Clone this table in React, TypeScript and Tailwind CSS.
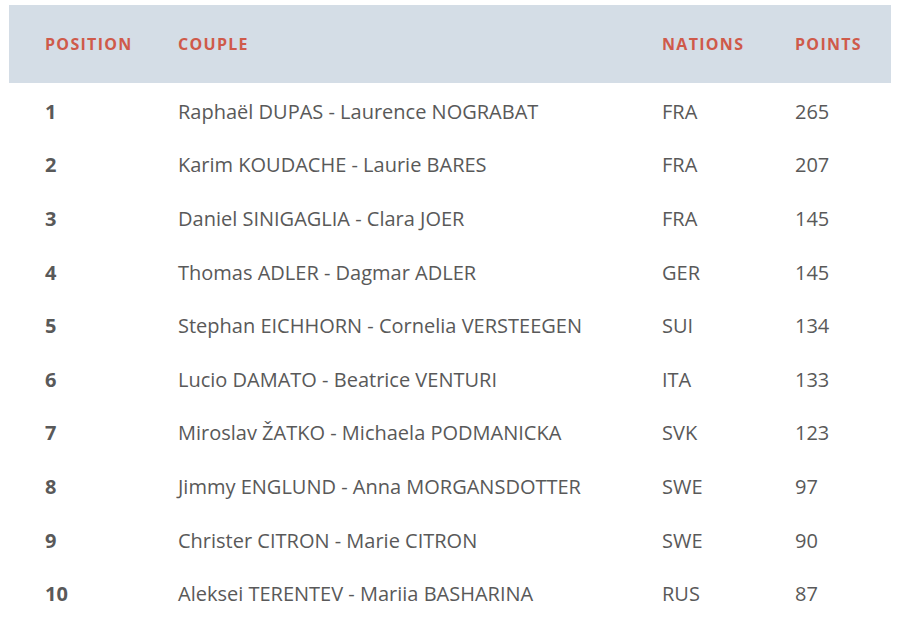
import React from "react";

const rows = [
  ["1", "Raphaël DUPAS - Laurence NOGRABAT", "FRA", "265"],
  ["2", "Karim KOUDACHE - Laurie BARES", "FRA", "207"],
  ["3", "Daniel SINIGAGLIA - Clara JOER", "FRA", "145"],
  ["4", "Thomas ADLER - Dagmar ADLER", "GER", "145"],
  ["5", "Stephan EICHHORN - Cornelia VERSTEEGEN", "SUI", "134"],
  ["6", "Lucio DAMATO - Beatrice VENTURI", "ITA", "133"],
  ["7", "Miroslav ŽATKO - Michaela PODMANICKA", "SVK", "123"],
  ["8", "Jimmy ENGLUND - Anna MORGANSDOTTER", "SWE", "97"],
  ["9", "Christer CITRON - Marie CITRON", "SWE", "90"],
  ["10", "Aleksei TERENTEV - Mariia BASHARINA", "RUS", "87"],
];

const cols = "grid grid-cols-[133px_484px_133px_1fr] pl-[36px]";

export default function App() {
  return (
    <div className="w-[900px] h-[638px] bg-white pt-[5px] px-[9px]" style={{ fontFamily: '"Open Sans", sans-serif' }}>
      <div className={`${cols} h-[78px] items-center bg-[#d4dde6] text-[#cf5a4a] font-bold text-[16px] tracking-[1.3px]`}>
        <div>POSITION</div>
        <div>COUPLE</div>
        <div>NATIONS</div>
        <div>POINTS</div>
      </div>
      <div className="pt-[2px]">
        {rows.map((r) => (
          <div key={r[0]} className={`${cols} h-[53.6px] items-center text-[#595959] text-[20px]`}>
            <div className="font-bold">{r[0]}</div>
            <div>{r[1]}</div>
            <div>{r[2]}</div>
            <div>{r[3]}</div>
          </div>
        ))}
      </div>
    </div>
  );
}
